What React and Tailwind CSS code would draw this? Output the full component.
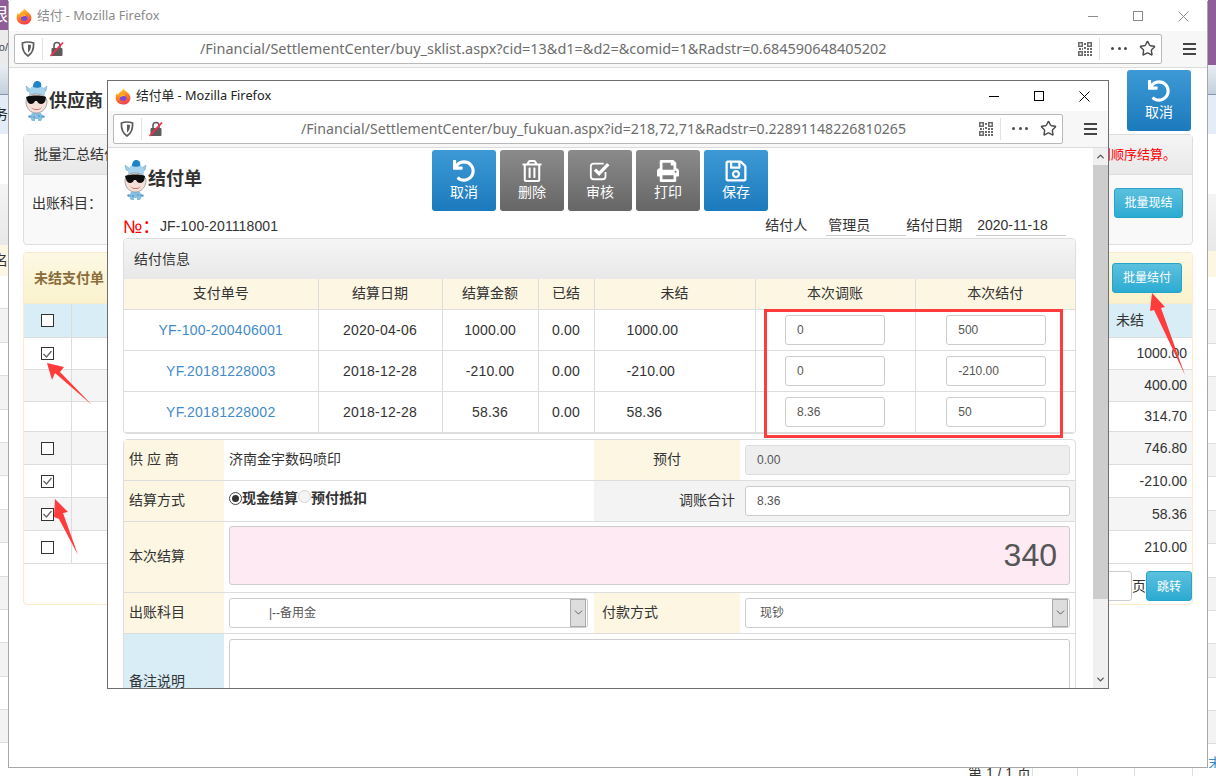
import { ChevronDown, ChevronUp, Star } from 'lucide-react';
import { FaUndo, FaRegTrashAlt, FaPrint, FaRegSave } from 'react-icons/fa';

const leftBands = ['bg-white', 'bg-[#f3f3f3]'];

function Firefox() {
  return (
    <svg width="16" height="17" viewBox="0 0 16 17" className="shrink-0">
      <defs>
        <linearGradient id="fx" x1="0.3" y1="0" x2="0.6" y2="1">
          <stop offset="0" stopColor="#ffd43a" />
          <stop offset="0.45" stopColor="#ff8a1f" />
          <stop offset="1" stopColor="#f23a4c" />
        </linearGradient>
      </defs>
      <path d="M8.600 0.600c0.600 2 2.200 2.400 3.600 3.600C14.600 6 15.600 8 15.400 10.400 15 14 12 16.600 8 16.600 3.800 16.600 0.600 13.600 0.600 9.600c0-1.800 0.600-3.600 1.600-4.800 0 1 0.400 1.600 1 2C3.600 4.400 6.800 3.600 8.600 0.600z" fill="url(#fx)" />
      <circle cx="8.200" cy="9.800" r="3.300" fill="#7a4bd6" />
      <path d="M4.400 9c1.400 0.400 2.600-0.800 3.800-1 1.400-0.200 2.400 0.400 3 1.200-0.600-2.200-2.200-3.400-4-3.200-1.400 0.200-2.400 1.400-2.800 3z" fill="#ffb020" />
    </svg>
  );
}

function Shield() {
  return (
    <svg width="14" height="16" viewBox="0 0 14 16" className="shrink-0">
      <path d="M7 1c2 0 4 .4 5.600 1 .2 5.500-.6 10-5.600 13C2 12 1.200 7.500 1.400 2 3 1.400 5 1 7 1z" fill="none" stroke="#5b5b5b" strokeWidth="1.700" />
      <path d="M7 3.500c1 0 2 .2 3 .5 0 3-.6 5.500-3 7.500z" fill="#5b5b5b" />
    </svg>
  );
}

function BrokenLock() {
  return (
    <svg width="14" height="16" viewBox="0 0 14 16" className="shrink-0">
      <path d="M4 7V4.500a3 3 0 0 1 6 0V7" fill="none" stroke="#5b5b5b" strokeWidth="1.600" />
      <rect x="1.500" y="7" width="11" height="8" rx="1" fill="#5b5b5b" />
      <path d="M0.500 15L13 1.500" stroke="#ff2a4d" strokeWidth="1.800" />
    </svg>
  );
}

function QrCode() {
  const cells = ['M0 0h5v5H0z', 'M9 0h5v5H9z', 'M0 9h5v5H0z', 'M6 1h2v2H6z', 'M6 5h2v2H6z', 'M1 6h2v2H1z', 'M4 6h1v2H4z', 'M9 6h2v2H9z', 'M12 6h2v2h-2z', 'M6 9h2v2H6z', 'M9 9h2v2H9z', 'M12 12h2v2h-2z', 'M6 12h2v2H6z', 'M9 12h2v2H9z', 'M12 9h2v2h-2z'];
  return (
    <svg width="14" height="14" viewBox="0 0 14 14" className="shrink-0">
      {cells.map((d) => (
        <path key={d} d={d} fill="#6a6a6a" />
      ))}
      <path d="M1.500 1.500h2v2h-2zM10.500 1.500h2v2h-2zM1.500 10.500h2v2h-2z" fill="#fff" />
    </svg>
  );
}

function UrlBar({ url, textClass }) {
  return (
    <div className="flex h-[30px] flex-1 items-center rounded-[2px] border border-[#b9b9b9] bg-white pl-[6px] pr-[5px]">
      <Shield />
      <span className="ml-[7px] h-[22px] w-px bg-[#e2e2e2]" />
      <span className="ml-[7px]">
        <BrokenLock />
      </span>
      <div className={`min-w-0 flex-1 truncate font-['Noto_Sans','Noto_Sans_CJK_SC',sans-serif] text-[#6d6d6d] ${textClass}`}>{url}</div>
      <QrCode />
      <span className="ml-[7px] h-[22px] w-px bg-[#e2e2e2]" />
      <div className="ml-[11px] flex w-[16px] justify-between">
        <span className="h-[3px] w-[3px] rounded-full bg-[#4a4a4a]" />
        <span className="h-[3px] w-[3px] rounded-full bg-[#4a4a4a]" />
        <span className="h-[3px] w-[3px] rounded-full bg-[#4a4a4a]" />
      </div>
      <Star size={17} strokeWidth={2} className="ml-[12px] text-[#4a4a4a]" />
    </div>
  );
}

function WindowChrome({ title, url, textClass, active }) {
  const ctl = active ? 'border-black' : 'border-[#8c8c8c]';
  const stroke = active ? '#000' : '#8c8c8c';
  return (
    <>
      <div className="flex h-[30px] shrink-0 items-center bg-white pl-[7px]">
        <Firefox />
        <div className={`ml-[5px] flex-1 font-['Noto_Sans','Noto_Sans_CJK_SC',sans-serif] text-[12.750px] ${active ? 'text-[#222]' : 'text-[#8a8a8a]'}`}>{title}</div>
        <div className="flex items-center pr-[18px]">
          <span className={`h-0 w-[10px] border-t ${ctl}`} />
          <span className={`ml-[35px] h-[10px] w-[10px] border ${ctl}`} />
          <svg width="11" height="11" viewBox="0 0 11 11" className="ml-[35px]">
            <path d="M0.500 0.500l10 10M10.500 0.500l-10 10" stroke={stroke} strokeWidth="1" />
          </svg>
        </div>
      </div>
      <div className="flex h-[37px] shrink-0 items-center border-b border-[#dcdcdc] bg-[#f7f7f7] pl-[5px] pb-[1px]">
        <UrlBar url={url} textClass={textClass} />
        <div className="flex w-[45px] flex-col items-center gap-[3px] pl-[9px]">
          <span className="h-[2px] w-[13px] bg-[#444]" />
          <span className="h-[2px] w-[13px] bg-[#444]" />
          <span className="h-[2px] w-[13px] bg-[#444]" />
        </div>
      </div>
    </>
  );
}

function Mascot() {
  return (
    <svg width="24" height="42" viewBox="0 0 24 42" className="shrink-0">
      <path d="M8 33c-2 3-2 6 0 8h3v-2h3v2h3c2-2 2-5 0-8z" fill="#86bfe2" />
      <path d="M9 36l2 1-1 1zM14 35l2 1-1 1z" fill="#2f7fb5" />
      <path d="M6 35l-2 1 1 2 3-1zM18 35l3 1-1 2-3-1z" fill="#5e9fcb" />
      <path d="M6 9L2 6l1 5 3 1zM19 9l4-3-1 5-3 1z" fill="#9ccbe7" stroke="#6f9fbd" strokeWidth="0.500" />
      <ellipse cx="13" cy="13" rx="8" ry="8" fill="#a9d3ec" />
      <path d="M9 7c0-4 2-6 4-6 3 0 5 2 4 6-2 1-6 1-8 0z" fill="#1e84c6" />
      <path d="M2 22C2 17 6 14 12 14s11 3 11 8-4 11-10.500 11S2 28 2 22z" fill="#f6dfd6" stroke="#7d8a92" strokeWidth="0.700" />
      <path d="M2 17c5-2 16-2 20 0l-.5 3c-1 5-7 5-8.500 1h-2c-1.500 4-7 4-8-1z" fill="#0f0f0f" />
      <path d="M7 27c3 3 8 3 11 0-2 4-9 4-11 0z" fill="#b5574f" />
    </svg>
  );
}

function CheckSquareIcon({ size }) {
  return (
    <svg width={size} height={size} viewBox="0 0 24 24" fill="none">
      <path d="M18 13v5a3 3 0 0 1-3 3H5a3 3 0 0 1-3-3V7a3 3 0 0 1 3-3h11" stroke="currentColor" strokeWidth="2" />
      <path d="M6.500 10.500l4.500 4.500 10-10.500" stroke="currentColor" strokeWidth="3.600" />
    </svg>
  );
}

function ActionButton({ icon: Icon, label, gray, iconSize = 22, className = '' }) {
  return (
    <button className={`flex h-[61px] w-[64px] flex-col items-center rounded-[3px] pt-[9px] text-[14px] leading-[20px] text-white ${gray ? 'bg-linear-to-b from-[#8b8b8b] to-[#666666]' : 'bg-linear-to-b from-[#3d9ad6] to-[#1b7abd]'} ${className}`}>
      <span className="flex h-[23px] items-center">
        <Icon size={iconSize} />
      </span>
      <span>{label}</span>
    </button>
  );
}

function TealButton({ children, className }) {
  return (
    <button className={`rounded-[3px] border border-[#28a4c9] bg-linear-to-b from-[#5bc0de] to-[#2aabd2] text-[12px] text-white ${className}`}>{children}</button>
  );
}

function CheckBox({ checked }) {
  return (
    <span className="flex h-[13px] w-[13px] items-center justify-center border border-[#333] bg-white">
      {checked && (
        <svg width="9" height="8" viewBox="0 0 9 8">
          <path d="M0.500 4l3 3 5-6" fill="none" stroke="#666" strokeWidth="1.300" />
        </svg>
      )}
    </span>
  );
}

function BackStrip({ side }) {
  const left = side === 'left';
  const rows = Array.from({ length: 15 }, (_, i) => i);
  return (
    <div className="w-[8px] overflow-hidden">
      {left ? (
        <>
          <div className="flex h-[30px] justify-end bg-[#8f5d97] text-[18px] leading-[30px] text-white">
            <span className="shrink-0">限</span>
          </div>
          <div className="flex h-[35px] justify-end bg-[#ebebeb] text-[11px] leading-[35px] text-[#444]">
            <span className="shrink-0">ro/</span>
          </div>
        </>
      ) : (
        <div className="h-[65px] bg-[#8f5d97]" />
      )}
      <div className="h-[30px] border-b border-[#7f97ad] bg-linear-to-b from-[#e9eef3] to-[#c3d0dc]" />
      <div className={`flex h-[39px] bg-[#e3ecf7] text-[14px] leading-[39px] text-[#222] ${left ? 'justify-end' : ''}`}>{left && <span className="shrink-0">后务</span>}</div>
      <div className={left ? 'h-[50px] bg-white' : 'h-[60px] bg-white'} />
      <div className={`bg-linear-to-b from-[#f4f4f4] to-[#e8e8e8] ${left ? 'h-[61px]' : 'h-[57px]'}`} />
      <div className={`flex bg-[#fcf6e2] text-[14px] leading-[30px] text-[#333] ${left ? 'h-[31px] justify-end' : 'h-[26px]'}`}>{left && <span className="shrink-0">名</span>}</div>
      {rows.map((i) => (
        <div key={i} className={`h-[33.400px] border-b border-[#dedede] ${leftBands[i % 2]}`}>
          {!left && i === 14 && <span className="block text-[14px] leading-[38px] text-[#428bca]">末</span>}
        </div>
      ))}
    </div>
  );
}

const payRows = [
  { h: 'h-[32px]', box: 'on', amt: '1000.00', gray: false },
  { h: 'h-[32px]', amt: '400.00', gray: true },
  { h: 'h-[30px]', amt: '314.70', gray: false },
  { h: 'h-[33px]', box: 'off', amt: '746.80', gray: true },
  { h: 'h-[33px]', box: 'on', amt: '-210.00', gray: false },
  { h: 'h-[33px]', box: 'on', amt: '58.36', gray: true },
  { h: 'h-[33px]', box: 'off', amt: '210.00', gray: false },
];

function OuterPage() {
  return (
    <div className="flex-1 overflow-hidden bg-white pl-[14px]">
      <div className="flex h-[66px] w-[1170px] items-center justify-between pl-[1px] pr-[2px]">
        <div className="flex items-center">
          <Mascot />
          <span className="ml-[1px] text-[18px] font-bold text-[#333]">供应商</span>
        </div>
        <ActionButton icon={FaUndo} label="取消" className="mt-[-1px]" />
      </div>

      <div className="h-[111px] w-[1170px] rounded-[4px] border border-[#dddddd] bg-[#f9f9f9]">
        <div className="flex h-[40px] items-center justify-between border-b border-[#dddddd] bg-linear-to-b from-[#f5f5f5] to-[#e8e8e8] pl-[10px] pr-[16px] text-[14px] text-[#333]">
          <span>批量汇总结付</span>
          <span className="text-[13px] text-[#ff0000]">结算时请按规则顺序结算。</span>
        </div>
        <div className="flex h-[70px] items-start justify-between pl-[8px] pr-[9px] pt-[13px] text-[14px] text-[#333]">
          <span className="mt-[5px]">出账科目：</span>
          <TealButton className="h-[30px] w-[69px]">批量现结</TealButton>
        </div>
      </div>

      <div className="mt-[7px] h-[353px] w-[1170px] rounded-[4px] border border-[#faebcc] bg-white">
        <div className="flex h-[51px] items-center justify-between border-b border-[#faebcc] bg-linear-to-b from-[#fcf8e3] to-[#faf2cc] pl-[10px] pr-[10px]">
          <span className="text-[14px] font-bold text-[#8a6d3b]">未结支付单</span>
          <TealButton className="h-[30px] w-[70px]">批量结付</TealButton>
        </div>
        <div className="flex h-[34px] items-center border-b border-[#dddddd] bg-[#d9edf7] text-[14px] text-[#333]">
          <span className="flex h-full w-[48px] items-center justify-center border-r border-[#dddddd]">
            <CheckBox />
          </span>
          <span className="ml-auto w-[76px]">未结</span>
        </div>
        {payRows.map((r) => (
          <div key={r.amt} className={`flex items-center border-b border-[#dddddd] text-[14px] text-[#333] ${r.h} ${r.gray ? 'bg-[#f5f5f5]' : 'bg-white'}`}>
            <span className="flex h-full w-[48px] items-center justify-center border-r border-[#dddddd]">
              {r.box && <CheckBox checked={r.box === 'on'} />}
            </span>
            <span className="ml-auto pr-[5px]">{r.amt}</span>
          </div>
        ))}
        <div className="flex items-start justify-end pt-[7px] text-[14px] leading-[30px] text-[#333]">
          <span className="h-[30px] w-[60px] rounded-[3px] border border-[#cccccc] bg-white" />
          <span className="w-[14px]">页</span>
          <TealButton className="h-[30px] w-[46px]">跳转</TealButton>
        </div>
      </div>
    </div>
  );
}

const billRows = [
  { no: 'YF-100-200406001', date: '2020-04-06', amt: '1000.00', left: '1000.00', adj: '0', pay: '500' },
  { no: 'YF.20181228003', date: '2018-12-28', amt: '-210.00', left: '-210.00', adj: '0', pay: '-210.00' },
  { no: 'YF.20181228002', date: '2018-12-28', amt: '58.36', left: '58.36', adj: '8.36', pay: '50' },
];

function Field({ value, className }) {
  return <div className={`flex items-center rounded-[3px] border border-[#cccccc] bg-white px-[11px] text-[12px] text-[#555] ${className}`}>{value}</div>;
}

function SelectBox({ value, className, textClass }) {
  return (
    <div className={`flex h-[30px] items-center justify-between rounded-[3px] border border-[#cccccc] bg-white pr-px text-[12px] text-[#555] ${className}`}>
      <span className={textClass}>{value}</span>
      <span className="flex h-[28px] w-[16px] items-center justify-center border border-[#aaaaaa] bg-[#dddddd]">
        <ChevronDown size={13} strokeWidth={1.500} className="text-[#444]" />
      </span>
    </div>
  );
}

function BillTable() {
  const th = 'h-[30px] border-r border-b border-[#dddddd] bg-[#fcf6e2] text-center font-normal last:border-r-0';
  const td = 'h-[41px] border-r border-b border-[#dddddd] text-center last:border-r-0';
  return (
    <table className="w-full table-fixed border-collapse text-[14px] text-[#333]">
      <colgroup>
        <col className="w-[194px]" />
        <col className="w-[124px]" />
        <col className="w-[96px]" />
        <col className="w-[56px]" />
        <col className="w-[161px]" />
        <col className="w-[160px]" />
        <col className="w-[160px]" />
      </colgroup>
      <thead>
        <tr>
          {['支付单号', '结算日期', '结算金额', '已结', '未结', '本次调账', '本次结付'].map((h) => (
            <th key={h} className={th}>{h}</th>
          ))}
        </tr>
      </thead>
      <tbody>
        {billRows.map((r) => (
          <tr key={r.no}>
            <td className={`${td} pt-[2px] tracking-[0.250px] text-[#428bca]`}>{r.no}</td>
            <td className={`${td} pt-[2px] tracking-[0.250px]`}>{r.date}</td>
            <td className={`${td} pt-[2px] tracking-[0.150px]`}>{r.amt}</td>
            <td className={`${td} pt-[2px] tracking-[0.150px]`}>0.00</td>
            <td className={`${td} pl-[32px] pt-[2px] !text-left tracking-[0.150px]`}>{r.left}</td>
            <td className={td}>
              <Field value={r.adj} className="mx-auto h-[30px] w-[100px]" />
            </td>
            <td className={`${td} pl-[2px]`}>
              <Field value={r.pay} className="mx-auto h-[30px] w-[100px]" />
            </td>
          </tr>
        ))}
      </tbody>
    </table>
  );
}

function Radio({ on }) {
  return (
    <span className={`flex h-[13px] w-[13px] shrink-0 items-center justify-center rounded-full border ${on ? 'border-[#444] bg-white' : 'border-[#d4d4d4] bg-[#f4f4f4]'}`}>
      {on && <span className="h-[7px] w-[7px] rounded-full bg-[#333]" />}
    </span>
  );
}

function FormPanel() {
  const label = 'flex w-[100px] shrink-0 items-center bg-[#fcf6e2] pl-[5px]';
  const row = 'flex border-b border-[#dddddd]';
  return (
    <div className="mt-[5px] w-[953px] rounded-t-[4px] border border-[#dddddd] text-[14px] text-[#333]">
      <div className={`${row} h-[41px]`}>
        <div className={label}>供 应 商</div>
        <div className="flex w-[370px] items-center pl-[5px]">济南金宇数码喷印</div>
        <div className="flex w-[146px] items-center justify-center bg-[#fcf6e2]">预付</div>
        <div className="ml-[5px] flex h-[30px] w-[325px] items-center self-center rounded-[3px] border border-[#dddddd] bg-[#eeeeee] px-[11px] text-[12px] text-[#555]">0.00</div>
      </div>
      <div className={`${row} h-[41px]`}>
        <div className={label}>结算方式</div>
        <div className="flex w-[370px] items-start pl-[5px] pt-[8px] font-bold">
          <span className="mt-[3px]">
            <Radio on />
          </span>
          <span className="leading-[18px]">现金结算</span>
          <span className="mt-[1px]">
            <Radio />
          </span>
          <span className="leading-[18px]">预付抵扣</span>
        </div>
        <div className="flex flex-1 items-center bg-[#f3f3f3]">
          <span className="w-[141px] text-right">调账合计</span>
          <Field value="8.36" className="ml-[10px] h-[30px] w-[325px]" />
        </div>
      </div>
      <div className={`${row} h-[71px]`}>
        <div className={label}>本次结算</div>
        <div className="ml-[5px] mt-[4px] flex h-[59px] w-[841px] items-center justify-end rounded-[3px] border border-[#cccccc] bg-[#fdeaf3] pr-[12px] text-[32px] text-[#555]">340</div>
      </div>
      <div className={`${row} h-[41px]`}>
        <div className={label}>出账科目</div>
        <div className="flex w-[370px] items-center pl-[5px]">
          <SelectBox value="|--备用金" className="w-[359px]" textClass="pl-[39px]" />
        </div>
        <div className="flex w-[146px] items-center bg-[#fcf6e2] pl-[8px]">付款方式</div>
        <div className="ml-[5px] flex items-center">
          <SelectBox value="现钞" className="w-[325px]" textClass="pl-[14px]" />
        </div>
      </div>
      <div className="flex h-[95px]">
        <div className={`${label} !bg-[#d9edf7]`}>备注说明</div>
        <div className="ml-[5px] mt-[5px] h-[85px] w-[841px] rounded-[3px] border border-[#cccccc] bg-white" />
      </div>
    </div>
  );
}

function InnerPage() {
  return (
    <div className="flex min-h-0 flex-1">
      <div className="flex-1 overflow-hidden bg-white pl-[15px]">
        <div className="flex h-[67px]">
          <div className="flex w-[309px] items-start pt-[11px]">
            <Mascot />
            <span className="ml-px mt-[7px] text-[18px] font-bold text-[#333]">结付单</span>
          </div>
          <div className="flex gap-[4px] pt-[2px]">
            <ActionButton icon={FaUndo} label="取消" />
            <ActionButton icon={FaRegTrashAlt} label="删除" gray />
            <ActionButton icon={CheckSquareIcon} label="审核" gray />
            <ActionButton icon={FaPrint} label="打印" gray />
            <ActionButton icon={FaRegSave} label="保存" iconSize={24} />
          </div>
        </div>
        <div className="flex h-[23px] items-center text-[14px] text-[#333]">
          <span className="w-[37px] text-[18px] leading-[20px] text-[#ff0000]">№：</span>
          <span className="tracking-[0.120px]">JF-100-201118001</span>
          <div className="ml-[487px] flex h-[23px] items-start">
            <span className="leading-[20px]">结付人</span>
            <span className="ml-[19px] w-[80px] border-b border-[#cccccc] pl-[2px] leading-[20px]">管理员</span>
            <span className="leading-[20px]">结付日期</span>
            <span className="ml-[14px] w-[90px] border-b border-[#cccccc] pl-px leading-[20px]">2020-11-18</span>
          </div>
        </div>
        <div className="w-[953px] overflow-hidden rounded-[4px] border border-[#dddddd]">
          <div className="flex h-[40px] items-center bg-linear-to-b from-[#f5f5f5] to-[#e8e8e8] pl-[10px] text-[14px] text-[#333]">结付信息</div>
          <BillTable />
        </div>
        <FormPanel />
      </div>
      <div className="flex w-[15px] flex-col items-center justify-between bg-[#f0f0f0]">
        <div className="flex h-[17px] items-center">
          <ChevronUp size={11} strokeWidth={3} className="text-[#555]" />
        </div>
        <div className="absolute top-[84px] h-[434px] w-[15px] bg-[#cdcdcd]" />
        <div className="flex h-[17px] items-center">
          <ChevronDown size={11} strokeWidth={3} className="text-[#555]" />
        </div>
      </div>
    </div>
  );
}

export default function App() {
  return (
    <div className="relative h-[776px] w-[1216px] overflow-hidden bg-white font-['Liberation_Sans','Noto_Sans_CJK_SC',sans-serif]">
      <div className="flex h-[768px] justify-between">
        <BackStrip side="left" />
        <BackStrip side="right" />
      </div>
      <div className="flex h-[8px] justify-end overflow-hidden text-[14px] leading-[20px] text-[#333]">
        <span className="w-[64px] -translate-y-[5px] whitespace-nowrap">第 1 / 1 页</span>
        <span className="w-[45px] border-l border-[#dddddd] pl-[13px] text-[#428bca]">
          <span className="block -translate-y-[17px]">首页</span>
        </span>
        <span className="w-[57px] border-l border-[#dddddd] pl-[10px] text-[#428bca]">
          <span className="block -translate-y-[17px]">上一页</span>
        </span>
        <span className="w-[58px] border-l border-[#dddddd] pl-[10px] text-[#428bca]">
          <span className="block -translate-y-[17px]">下一页</span>
        </span>
        <span className="w-[24px] border-l border-[#dddddd]" />
      </div>

      <div className="absolute left-[8px] top-[1px] flex h-[767px] w-[1200px] flex-col border border-t-0 border-[#a8a8a8] bg-white">
        <WindowChrome
          title="结付 - Mozilla Firefox"
          url="/Financial/SettlementCenter/buy_sklist.aspx?cid=13&d1=&d2=&comid=1&Radstr=0.684590648405202"
          textClass="pl-[136px] text-[14.450px]"
        />
        <OuterPage />
      </div>

      <div className="absolute left-[107px] top-[80px] flex h-[609px] w-[1002px] flex-col border border-[#6e6e6e] bg-white">
        <WindowChrome
          active
          title="结付单 - Mozilla Firefox"
          url="/Financial/SettlementCenter/buy_fukuan.aspx?id=218,72,71&Radstr=0.22891148226810265"
          textClass="pl-[138px] text-[14.150px]"
        />
        <InnerPage />
      </div>

      <div className="absolute left-[764px] top-[309px] h-[129px] w-[299px] border-[3px] border-[#ff3b3b]" />
      <svg width="1216" height="776" className="pointer-events-none absolute left-0 top-0">
        <polygon points="47,363 64,367 60,372 92,405 55,373 52,380" fill="#ff3b3b" />
        <polygon points="55,499 68,512 63,513 78,555 59,519 54,517" fill="#ff3b3b" />
        <polygon points="1152,293 1165,307 1161,308 1185,375 1154,310 1150,311" fill="#ff3b3b" />
      </svg>
    </div>
  );
}
